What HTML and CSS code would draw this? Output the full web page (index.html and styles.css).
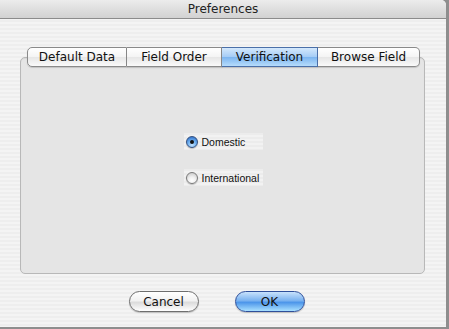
FILE: index.html
```html
<!DOCTYPE html>
<html lang="en">
<head>
    <meta charset="UTF-8">
    <title>Preferences</title>
    <link rel="stylesheet" href="styles.css">
</head>
<body>
    <div class="window">
        <div class="titlebar">Preferences</div>

        <div class="content">
            <div class="tabbox">
                <div class="tabs">
                    <div class="tab first">Default Data</div>
                    <div class="tab">Field Order</div>
                    <div class="tab selected">Verification</div>
                    <div class="tab last">Browse Field</div>
                </div>

                <div class="panel">
                    <div class="radio-group">
                        <label class="radio">
                            <span class="radio-dot checked"></span>
                            <span>Domestic</span>
                        </label>
                        <label class="radio">
                            <span class="radio-dot"></span>
                            <span>International</span>
                        </label>
                    </div>
                </div>
            </div>

            <div class="buttons">
                <button class="btn">Cancel</button>
                <button class="btn default">OK</button>
            </div>
        </div>
    </div>
</body>
</html>
```

FILE: styles.css
```css
body {
    margin: 0;
    background-color: #8e8e8e;
    font-family: "DejaVu Sans", Verdana, sans-serif;
    color: #111;
}

.window {
    width: 446px;
    height: 327px;
    border-top-right-radius: 5px;
    overflow: hidden;
    background: repeating-linear-gradient(#eeeeee 0 2px, #f4f4f4 2px 4px);
}

.titlebar {
    height: 19px;
    line-height: 19px;
    text-align: center;
    font-size: 12px;
    color: #222;
    background: linear-gradient(#ececec, #d2d2d2);
    border-bottom: 1px solid #8c8c8c;
    box-sizing: border-box;
}

.content {
    padding: 28px 0 0 20px;
}

.tabbox {
    width: 405px;
}

.tabs {
    display: flex;
    margin-left: 7px;
    position: relative;
    z-index: 1;
}

.tab {
    height: 20px;
    line-height: 19px;
    box-sizing: border-box;
    padding: 0 10px;
    font-size: 12px;
    text-align: center;
    background: linear-gradient(#ffffff, #f4f4f4 50%, #e6e6e6 51%, #fafafa);
    border: 1px solid #8a8a8a;
    border-left: none;
    box-shadow: 0 1px 1px rgba(0,0,0,0.15);
}

.tab:nth-child(1) { width: 100px; }
.tab:nth-child(2) { width: 95px; }
.tab:nth-child(3) { width: 96px; }
.tab:nth-child(4) { width: 102px; }

.tab.first {
    border-left: 1px solid #8a8a8a;
    border-radius: 5px 0 0 5px;
}

.tab.last {
    border-radius: 0 5px 5px 0;
}

.tab.selected {
    background: linear-gradient(#d4e8fc, #a6cdf6 48%, #7db5f0 52%, #b6dcfb);
    border-color: #4a6fa8;
}

.panel {
    margin-top: -10px;
    height: 217px;
    box-sizing: border-box;
    padding-top: 75px;
    background-color: #e5e5e5;
    border: 1px solid #b8b8b8;
    border-radius: 5px;
    box-shadow: inset 0 1px 1px rgba(0,0,0,0.06);
    display: flex;
    justify-content: center;
}

.radio-group {
    display: flex;
    flex-direction: column;
    gap: 19px;
    margin-left: 1px;
}

.radio {
    display: flex;
    align-items: center;
    gap: 4px;
    width: 79px;
    height: 17px;
    padding-left: 2px;
    box-sizing: border-box;
    font-family: "Liberation Sans", Arial, sans-serif;
    font-size: 10.5px;
    background: repeating-linear-gradient(#ececec 0 2px, #f2f2f2 2px 4px);
}

.radio-dot {
    width: 12px;
    height: 12px;
    box-sizing: border-box;
    border-radius: 50%;
    border: 1px solid #7a7a7a;
    background: radial-gradient(circle at 50% 75%, #ffffff, #f0f0f0 40%, #c8c8c8 90%);
    box-shadow: 0 1px 1px rgba(0,0,0,0.2);
    display: flex;
    align-items: center;
    justify-content: center;
    flex: none;
}

.radio-dot.checked {
    border-color: #34507e;
    background: radial-gradient(circle at 50% 80%, #c4e4ff, #6fb0f0 45%, #2e6fc8 90%);
}

.radio-dot.checked::after {
    content: "";
    width: 4px;
    height: 4px;
    border-radius: 50%;
    background-color: #111;
}

.buttons {
    display: flex;
    justify-content: center;
    gap: 36px;
    padding: 17px 33px 0 0;
}

.btn {
    width: 70px;
    height: 21px;
    padding: 0;
    font-family: "DejaVu Sans", Verdana, sans-serif;
    font-size: 12px;
    color: #111;
    border: 1px solid #6e6e6e;
    border-radius: 11px;
    background: linear-gradient(#ffffff, #f2f2f2 45%, #dcdcdc 55%, #ffffff);
    box-shadow: 0 1px 1px rgba(0,0,0,0.2);
}

.btn.default {
    border-color: #2f4f9a;
    background: linear-gradient(#c8e2fc, #7ab2f0 45%, #4d96ea 55%, #a9e0ff);
}
```
